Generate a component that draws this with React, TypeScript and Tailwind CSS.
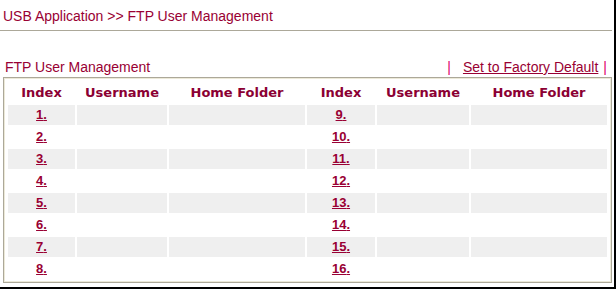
import React from "react";

const maroon = "text-[#990033]";

const rows = [1, 2, 3, 4, 5, 6, 7, 8];

const HeaderCells = () => (
  <>
    <div className="flex items-center justify-center pt-[1px]">Index</div>
    <div className="flex items-center justify-center pt-[1px]">Username</div>
    <div className="flex items-center justify-center pt-[1px]">Home Folder</div>
  </>
);

const Row = ({ n, shade }: { n: number; shade: boolean }) => {
  const bg = shade ? "bg-[#efefef]" : "bg-white";
  return (
    <>
      <div className={`${bg} h-[20px] flex items-center justify-center`}>
        <a href="#" className={`${maroon} underline font-bold text-[13px] leading-[20px] font-['Liberation_Sans',Arial,sans-serif]`}>
          {n}.
        </a>
      </div>
      <div className={`${bg} h-[20px]`} />
      <div className={`${bg} h-[20px]`} />
    </>
  );
};

export default function App() {
  return (
    <div className="w-[616px] h-[289px] bg-white border-r-2 border-b-2 border-black font-['Liberation_Sans',Arial,sans-serif]">
      {/* page title */}
      <div className={`w-[612px] h-[31px] border-b border-[#aca899] pl-[3px] pt-[8px] text-[14px] leading-[16px] ${maroon}`}>
        USB Application &gt;&gt; FTP User Management
      </div>

      {/* section title + factory default link */}
      <div className="h-[46px] flex items-end justify-between pl-[5px] pr-[7px] pb-[2px] text-[14px] leading-[16px]">
        <span className={maroon}>FTP User Management</span>
        <span className="flex items-center">
          <span className="text-[#e0006a]">|</span>
          <a href="#" className={`${maroon} underline ml-[12px]`}>Set to Factory Default</a>
          <span className="text-[#e0006a] ml-[5px]">|</span>
        </span>
      </div>

      {/* table frame */}
      <div className="ml-[3px] w-[609px] h-[206px] border border-[#aca899]">
        <div className="h-full border border-[#ece9d8] pl-[3px] pt-[2px]">
          <div className="grid grid-cols-[67px_90px_136px_68px_92px_136px] gap-[2px]">
            <div className="contents font-['DejaVu_Sans',Verdana,sans-serif] font-bold text-[13px] text-[#8b0033]">
              <div className="col-span-6 grid grid-cols-[67px_90px_136px_68px_92px_136px] gap-[2px] h-[22px] leading-[15px]">
                <HeaderCells />
                <HeaderCells />
              </div>
            </div>
            {rows.map((r) => (
              <React.Fragment key={r}>
                <Row n={r} shade={r % 2 === 1} />
                <Row n={r + 8} shade={r % 2 === 1} />
              </React.Fragment>
            ))}
          </div>
        </div>
      </div>
    </div>
  );
}
